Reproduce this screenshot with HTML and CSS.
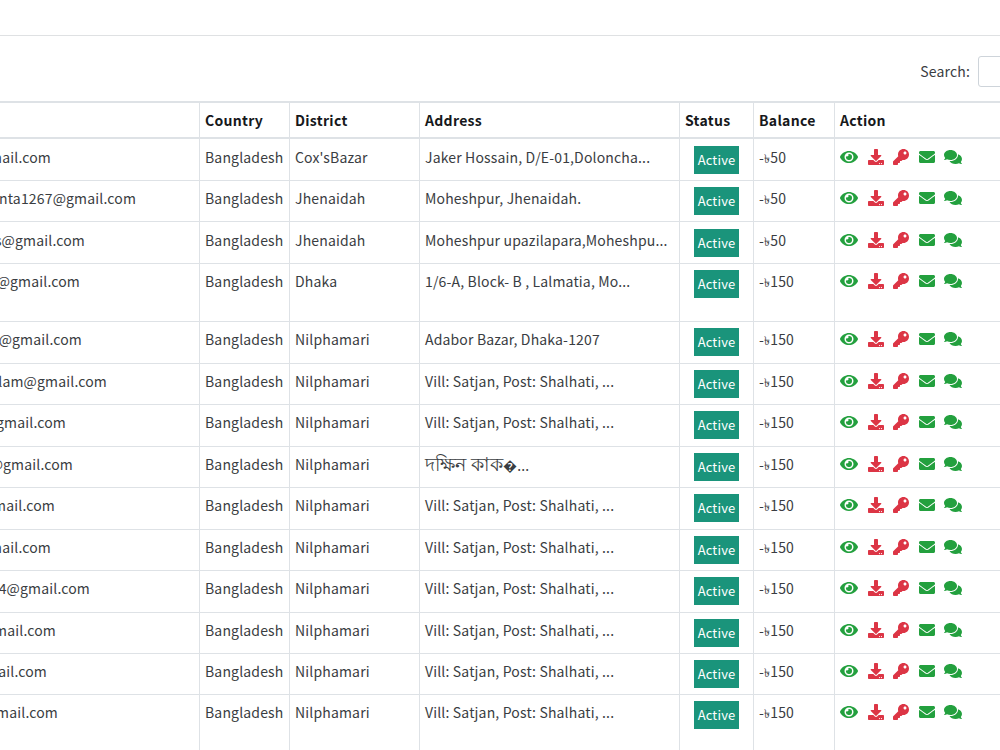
FILE: index.html
```
<!DOCTYPE html>
<html lang="en">
<head>
<meta charset="utf-8">
<title>Customers</title>
<link rel="stylesheet" href="styles.css">
</head>
<body>
<svg class="sprite" aria-hidden="true">
<symbol id="eye" viewBox="0 0 576 512"><path d="M572.52 241.4C518.29 135.59 410.93 64 288 64S57.68 135.64 3.48 241.41a32.35 32.35 0 0 0 0 29.19C57.71 376.41 165.07 448 288 448s230.32-71.64 284.52-177.41a32.35 32.35 0 0 0 0-29.19zM288 400a144 144 0 1 1 144-144 143.93 143.93 0 0 1-144 144zm0-240a95.31 95.31 0 0 0-25.31 3.79 47.85 47.85 0 0 1-66.9 66.9A95.78 95.78 0 1 0 288 160z"/></symbol>
<symbol id="download" viewBox="0 0 512 512"><path d="M216 0h80c13.3 0 24 10.7 24 24v168h87.7c17.8 0 26.7 21.5 14.1 34.1L269.7 378.3c-7.5 7.5-19.8 7.5-27.3 0L90.1 226.1c-12.6-12.6-3.7-34.1 14.1-34.1H192V24c0-13.3 10.7-24 24-24zm296 376v112c0 13.3-10.7 24-24 24H24c-13.3 0-24-10.7-24-24V376c0-13.3 10.7-24 24-24h146.7l49 49c20.1 20.1 52.5 20.1 72.6 0l49-49H488c13.3 0 24 10.7 24 24zm-124 88c0-11-9-20-20-20s-20 9-20 20 9 20 20 20 20-9 20-20zm64 0c0-11-9-20-20-20s-20 9-20 20 9 20 20 20 20-9 20-20z"/></symbol>
<symbol id="key" viewBox="0 0 512 512"><path d="M512 176.001C512 273.203 433.202 352 336 352c-11.22 0-22.19-1.062-32.827-3.069l-24.012 27.014A23.999 23.999 0 0 1 261.223 384H224v40c0 13.255-10.745 24-24 24h-40v40c0 13.255-10.745 24-24 24H24c-13.255 0-24-10.745-24-24v-78.059c0-6.365 2.529-12.47 7.029-16.971l161.802-161.802C163.108 213.814 160 195.271 160 176 160 78.798 238.797.001 335.999 0 433.488-.001 512 78.511 512 176.001zM336 128c0 26.51 21.49 48 48 48s48-21.49 48-48-21.49-48-48-48-48 21.49-48 48z"/></symbol>
<symbol id="mail" viewBox="0 0 512 512"><path d="M502.3 190.8c3.9-3.1 9.7-.2 9.7 4.7V400c0 26.5-21.5 48-48 48H48c-26.5 0-48-21.5-48-48V195.6c0-5 5.7-7.8 9.7-4.7 22.4 17.4 52.1 39.5 154.1 113.6 21.1 15.4 56.7 47.8 92.2 47.6 35.7.3 72-32.8 92.3-47.6 102-74.1 131.6-96.3 154-113.7zM256 320c23.2.4 56.6-29.2 73.4-41.4 132.7-96.3 142.8-104.7 173.4-128.7 5.8-4.5 9.2-11.5 9.2-18.9v-19c0-26.5-21.5-48-48-48H48c-26.5 0-48 21.5-48 48v19c0 7.4 3.4 14.3 9.2 18.9 30.6 23.9 40.7 32.4 173.4 128.7 16.8 12.2 50.2 41.8 73.4 41.4z"/></symbol>
<symbol id="chat" viewBox="0 0 576 512"><path d="M416 192c0-88.4-93.1-160-208-160S0 103.6 0 192c0 34.3 14.1 65.9 38 92-13.4 30.2-35.5 54.2-35.8 54.5-2.2 2.3-2.8 5.7-1.5 8.7S4.8 352 8 352c36.6 0 66.9-12.3 88.7-25 32.2 15.7 70.3 25 111.3 25 114.9 0 208-71.6 208-160zm122 220c23.9-26 38-57.7 38-92 0-66.9-53.5-124.2-129.3-148.1.9 6.6 1.3 13.3 1.3 20.1 0 105.9-107.7 192-240 192-10.8 0-21.3-.8-31.7-1.9C207.8 439.6 281.8 480 368 480c41 0 79.1-9.2 111.3-25 21.8 12.7 52.1 25 88.7 25 3.2 0 6.1-1.9 7.3-4.8 1.3-2.9.7-6.3-1.5-8.7-.3-.2-22.4-24.2-35.8-54.5z"/></symbol>
</svg>
<header class="card-header"></header>
<div class="toolbar"><label for="q">Search:</label><input id="q" class="search" type="text"></div>
<main class="table">
<div class="row head"><div></div><div>Country</div><div>District</div><div>Address</div><div>Status</div><div>Balance</div><div>Action</div></div>
<div class="row"><div class="email"><span style="width:51px">mail.com</span></div><div>Bangladesh</div><div>Cox'sBazar</div><div>Jaker Hossain, D/E-01,Doloncha...</div><div class="status"><b>Active</b></div><div>-<i class="taka">৳</i>50</div><div class="actions"><svg class="wide"><use href="#eye"/></svg><svg class="red"><use href="#download"/></svg><svg class="red"><use href="#key"/></svg><svg><use href="#mail"/></svg><svg class="wide"><use href="#chat"/></svg></div></div>
<div class="row short up"><div class="email"><span style="width:136px">nta1267@gmail.com</span></div><div>Bangladesh</div><div>Jhenaidah</div><div>Moheshpur, Jhenaidah.</div><div class="status"><b>Active</b></div><div>-<i class="taka">৳</i>50</div><div class="actions"><svg class="wide"><use href="#eye"/></svg><svg class="red"><use href="#download"/></svg><svg class="red"><use href="#key"/></svg><svg><use href="#mail"/></svg><svg class="wide"><use href="#chat"/></svg></div></div>
<div class="row"><div class="email"><span style="width:85px">s@gmail.com</span></div><div>Bangladesh</div><div>Jhenaidah</div><div>Moheshpur upazilapara,Moheshpu...</div><div class="status"><b>Active</b></div><div>-<i class="taka">৳</i>50</div><div class="actions"><svg class="wide"><use href="#eye"/></svg><svg class="red"><use href="#download"/></svg><svg class="red"><use href="#key"/></svg><svg><use href="#mail"/></svg><svg class="wide"><use href="#chat"/></svg></div></div>
<div class="row tall up"><div class="email"><span style="width:80px">@gmail.com</span></div><div>Bangladesh</div><div>Dhaka</div><div>1/6-A, Block- B , Lalmatia, Mo...</div><div class="status"><b>Active</b></div><div>-<i class="taka">৳</i>150</div><div class="actions"><svg class="wide"><use href="#eye"/></svg><svg class="red"><use href="#download"/></svg><svg class="red"><use href="#key"/></svg><svg><use href="#mail"/></svg><svg class="wide"><use href="#chat"/></svg></div></div>
<div class="row up"><div class="email"><span style="width:82px">@gmail.com</span></div><div>Bangladesh</div><div>Nilphamari</div><div>Adabor Bazar, Dhaka-1207</div><div class="status"><b>Active</b></div><div>-<i class="taka">৳</i>150</div><div class="actions"><svg class="wide"><use href="#eye"/></svg><svg class="red"><use href="#download"/></svg><svg class="red"><use href="#key"/></svg><svg><use href="#mail"/></svg><svg class="wide"><use href="#chat"/></svg></div></div>
<div class="row short up"><div class="email"><span style="width:107px">lam@gmail.com</span></div><div>Bangladesh</div><div>Nilphamari</div><div>Vill: Satjan, Post: Shalhati, ...</div><div class="status"><b>Active</b></div><div>-<i class="taka">৳</i>150</div><div class="actions"><svg class="wide"><use href="#eye"/></svg><svg class="red"><use href="#download"/></svg><svg class="red"><use href="#key"/></svg><svg><use href="#mail"/></svg><svg class="wide"><use href="#chat"/></svg></div></div>
<div class="row up"><div class="email"><span style="width:66px">gmail.com</span></div><div>Bangladesh</div><div>Nilphamari</div><div>Vill: Satjan, Post: Shalhati, ...</div><div class="status"><b>Active</b></div><div>-<i class="taka">৳</i>150</div><div class="actions"><svg class="wide"><use href="#eye"/></svg><svg class="red"><use href="#download"/></svg><svg class="red"><use href="#key"/></svg><svg><use href="#mail"/></svg><svg class="wide"><use href="#chat"/></svg></div></div>
<div class="row short up"><div class="email"><span style="width:73px">@gmail.com</span></div><div>Bangladesh</div><div>Nilphamari</div><div><span class="bengali">দক্ষিন কাক</span>�...</div><div class="status"><b>Active</b></div><div>-<i class="taka">৳</i>150</div><div class="actions"><svg class="wide"><use href="#eye"/></svg><svg class="red"><use href="#download"/></svg><svg class="red"><use href="#key"/></svg><svg><use href="#mail"/></svg><svg class="wide"><use href="#chat"/></svg></div></div>
<div class="row up"><div class="email"><span style="width:55px">mail.com</span></div><div>Bangladesh</div><div>Nilphamari</div><div>Vill: Satjan, Post: Shalhati, ...</div><div class="status"><b>Active</b></div><div>-<i class="taka">৳</i>150</div><div class="actions"><svg class="wide"><use href="#eye"/></svg><svg class="red"><use href="#download"/></svg><svg class="red"><use href="#key"/></svg><svg><use href="#mail"/></svg><svg class="wide"><use href="#chat"/></svg></div></div>
<div class="row short up"><div class="email"><span style="width:51px">mail.com</span></div><div>Bangladesh</div><div>Nilphamari</div><div>Vill: Satjan, Post: Shalhati, ...</div><div class="status"><b>Active</b></div><div>-<i class="taka">৳</i>150</div><div class="actions"><svg class="wide"><use href="#eye"/></svg><svg class="red"><use href="#download"/></svg><svg class="red"><use href="#key"/></svg><svg><use href="#mail"/></svg><svg class="wide"><use href="#chat"/></svg></div></div>
<div class="row up"><div class="email"><span style="width:90px">4@gmail.com</span></div><div>Bangladesh</div><div>Nilphamari</div><div>Vill: Satjan, Post: Shalhati, ...</div><div class="status"><b>Active</b></div><div>-<i class="taka">৳</i>150</div><div class="actions"><svg class="wide"><use href="#eye"/></svg><svg class="red"><use href="#download"/></svg><svg class="red"><use href="#key"/></svg><svg><use href="#mail"/></svg><svg class="wide"><use href="#chat"/></svg></div></div>
<div class="row short up"><div class="email"><span style="width:56px">mail.com</span></div><div>Bangladesh</div><div>Nilphamari</div><div>Vill: Satjan, Post: Shalhati, ...</div><div class="status"><b>Active</b></div><div>-<i class="taka">৳</i>150</div><div class="actions"><svg class="wide"><use href="#eye"/></svg><svg class="red"><use href="#download"/></svg><svg class="red"><use href="#key"/></svg><svg><use href="#mail"/></svg><svg class="wide"><use href="#chat"/></svg></div></div>
<div class="row short up"><div class="email"><span style="width:47px">ail.com</span></div><div>Bangladesh</div><div>Nilphamari</div><div>Vill: Satjan, Post: Shalhati, ...</div><div class="status"><b>Active</b></div><div>-<i class="taka">৳</i>150</div><div class="actions"><svg class="wide"><use href="#eye"/></svg><svg class="red"><use href="#download"/></svg><svg class="red"><use href="#key"/></svg><svg><use href="#mail"/></svg><svg class="wide"><use href="#chat"/></svg></div></div>
<div class="row tall up"><div class="email"><span style="width:58px">mail.com</span></div><div>Bangladesh</div><div>Nilphamari</div><div>Vill: Satjan, Post: Shalhati, ...</div><div class="status"><b>Active</b></div><div>-<i class="taka">৳</i>150</div><div class="actions"><svg class="wide"><use href="#eye"/></svg><svg class="red"><use href="#download"/></svg><svg class="red"><use href="#key"/></svg><svg><use href="#mail"/></svg><svg class="wide"><use href="#chat"/></svg></div></div>
</main>
</body>
</html>
```
FILE: styles.css
```
* { box-sizing: border-box; }
body {
  margin: 0;
  height: 750px;
  overflow: hidden;
  background: #fff;
  color: #3a3d42;
  font: 14px/20px "Noto Sans CJK SC", "Noto Sans", sans-serif;
  letter-spacing: 0.16px;
}
.sprite { display: none; }
.card-header { height: 36px; border-bottom: 1px solid #dfe1e3; }
.toolbar {
  height: 65px;
  padding-top: 20px;
  display: flex;
  justify-content: flex-end;
  align-items: flex-start;
  gap: 8px;
  overflow: hidden;
}
.toolbar label { padding-top: 5px; margin-left: auto; }
.search {
  width: 160px;
  height: 31px;
  margin-right: -138px;
  border: 1px solid #ced4da;
  border-radius: 3px;
}
.table { border-top: 2px solid #dee2e6; }
.row {
  display: grid;
  grid-template-columns: 200px 90px 130px 260px 74px 81px 165px;
  height: 42px;
  border-bottom: 1px solid #dee2e6;
}
.row > div {
  padding: 8px 0 0 5px;
  border-right: 1px solid #dee2e6;
  white-space: nowrap;
  overflow: hidden;
}
.row > div:last-child { border-right: 0; }
.up > div { padding-top: 7px; }
.short { height: 41px; }
.tall { height: 58px; }
.head {
  height: 36px;
  border-bottom: 2px solid #dee2e6;
  color: #16181b;
  font-weight: 700;
  letter-spacing: 0.3px;
}
.head > div { padding-top: 7px; }
.row > .email { padding-left: 0; }
.email span { display: flex; justify-content: flex-end; overflow: hidden; }
.status b {
  display: block;
  width: 45px;
  height: 28px;
  margin-left: 9px;
  background: #1a947b;
  color: #fff;
  font-size: 13px;
  font-weight: 400;
  line-height: 27px;
  text-align: center;
}
.row > .status { padding-top: 7px; }
.up > .status { padding-top: 6px; }
.taka { font-style: normal; font-size: 12px; }
.bengali { font-size: 18.5px; line-height: 1; }
.row > .actions { display: flex; gap: 9.5px; padding: 9.5px 0 0 5px; }
.up > .actions { padding-top: 8.5px; }
.actions svg { width: 16px; height: 16px; fill: #23a03e; flex: none; }
.actions .wide { width: 18px; }
.actions .red { fill: #dc3545; }
```
